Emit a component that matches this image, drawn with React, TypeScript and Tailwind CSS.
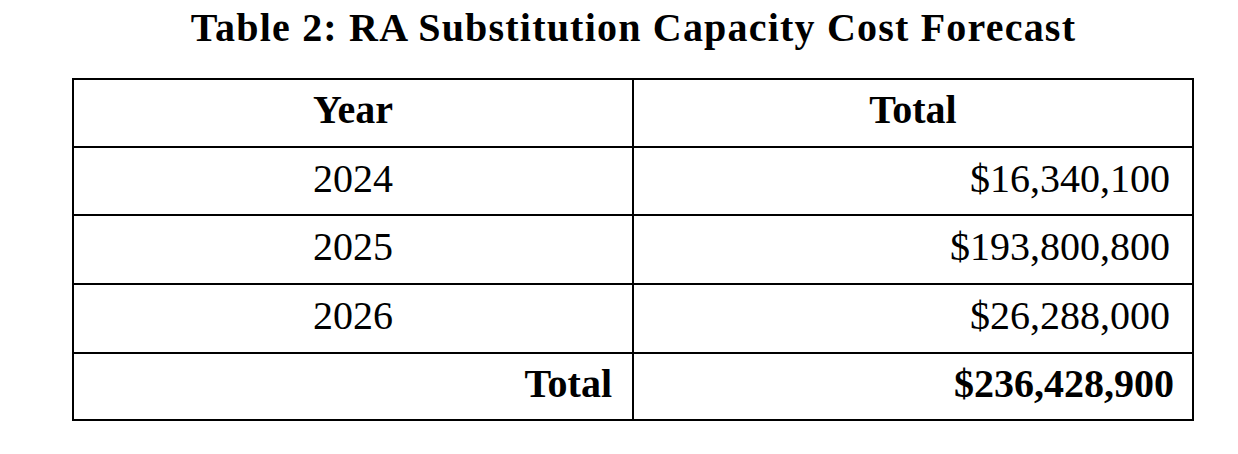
import React from "react";

const rows = [
  { year: "2024", total: "$16,340,100", h: "h-[68px]" },
  { year: "2025", total: "$193,800,800", h: "h-[69px]" },
  { year: "2026", total: "$26,288,000", h: "h-[69px]" },
];

export default function App() {
  return (
    <div
      className="w-[1238px] h-[454px] bg-white text-black"
      style={{ fontFamily: '"Liberation Serif", "Times New Roman", serif' }}
    >
      <div className="pl-[72px] pt-[5px]">
        <div className="w-[1122px] pl-[1px] text-center font-bold text-[40px] leading-[46px] tracking-[1.2px]">
          Table 2: RA Substitution Capacity Cost Forecast
        </div>
        <div className="mt-[27px] w-[1122px] border-2 border-black text-[40px] leading-[46px]">
          <div className="flex h-[68px] border-b-2 border-black font-bold">
            <div className="w-[560px] border-r-2 border-black flex items-center justify-center pb-[6px]">
              Year
            </div>
            <div className="flex-1 flex items-center justify-center pb-[6px]">Total</div>
          </div>
          {rows.map((r) => (
            <div key={r.year} className={`flex ${r.h} border-b-2 border-black`}>
              <div className="w-[560px] border-r-2 border-black flex items-center justify-center pb-[5px]">
                {r.year}
              </div>
              <div className="flex-1 flex items-center justify-end pr-[22px] pb-[5px]">
                {r.total}
              </div>
            </div>
          ))}
          <div className="flex h-[65px] font-bold">
            <div className="w-[560px] border-r-2 border-black flex items-center justify-end pr-[20px] pb-[5px]">
              Total
            </div>
            <div className="flex-1 flex items-center justify-end pr-[18px] pb-[5px]">
              $236,428,900
            </div>
          </div>
        </div>
      </div>
    </div>
  );
}
